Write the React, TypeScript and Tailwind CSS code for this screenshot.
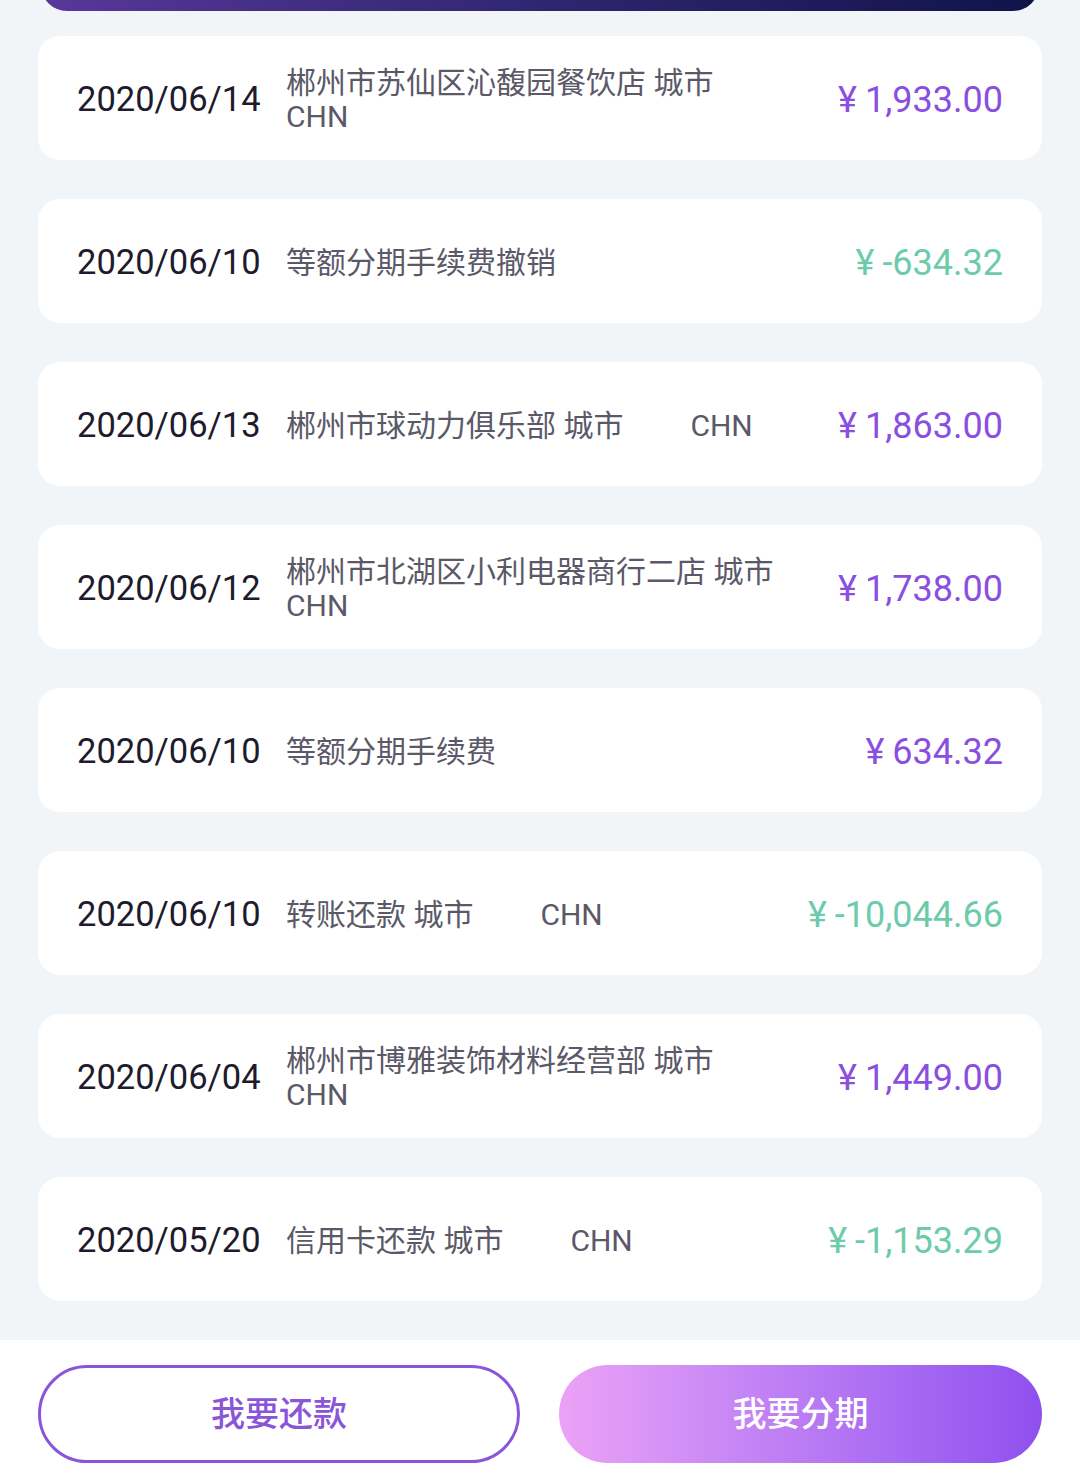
const rows = [
  { date: "2020/06/14", desc: "郴州市苏仙区沁馥园餐饮店 城市         CHN", amount: "1,933.00", out: true },
  { date: "2020/06/10", desc: "等额分期手续费撤销", amount: "-634.32", out: false },
  { date: "2020/06/13", desc: "郴州市球动力俱乐部 城市         CHN", amount: "1,863.00", out: true },
  { date: "2020/06/12", desc: "郴州市北湖区小利电器商行二店 城市         CHN", amount: "1,738.00", out: true },
  { date: "2020/06/10", desc: "等额分期手续费", amount: "634.32", out: true },
  { date: "2020/06/10", desc: "转账还款 城市         CHN", amount: "-10,044.66", out: false },
  { date: "2020/06/04", desc: "郴州市博雅装饰材料经营部 城市         CHN", amount: "1,449.00", out: true },
  { date: "2020/05/20", desc: "信用卡还款 城市         CHN", amount: "-1,153.29", out: false },
];

export default function App() {
  return (
    <div className="w-[1080px] h-[1480px] overflow-hidden bg-[#f2f5f8] font-[Roboto,'Noto_Sans_CJK_SC',sans-serif]">
      {/* header card, mostly scrolled away */}
      <div className="mx-[41px] mt-[-49px] h-[60px] rounded-b-[26px] bg-gradient-to-r from-[#58379a] via-[#302670] to-[#10134a]" />

      <div className="flex flex-col gap-[39px] px-[38px] pt-[25px] pb-[39px]">
        {rows.map((r, i) => (
          <div key={i} className="flex h-[124px] items-center rounded-[22px] bg-white px-[39px] pt-[4px]">
            <div className="w-[209px] shrink-0 text-[34.5px] text-[#1d1b2c]">{r.date}</div>
            <div className="min-w-0 flex-1 text-[30px] leading-[34px] text-[#5b5968]">
              <span className="whitespace-pre-wrap">{r.desc}</span>
            </div>
            <div className={`ml-[24px] shrink-0 text-[36px] leading-[40px] ${r.out ? "text-[#8a4fe0]" : "text-[#6ccbab]"}`}>
              <span className="mr-[8px]">¥</span>
              {r.amount}
            </div>
          </div>
        ))}
      </div>

      <div className="flex h-[140px] justify-between bg-white px-[38px] pt-[25px]">
        <button className="flex h-[98px] w-[482px] items-center justify-center rounded-full border-[3px] border-[#8a55d8] text-[34px] font-medium text-[#8a55d8]">
          我要还款
        </button>
        <button className="flex h-[98px] w-[483px] items-center justify-center rounded-full bg-gradient-to-r from-[#eba2f6] to-[#8f4fef] text-[34px] font-medium text-white">
          我要分期
        </button>
      </div>
    </div>
  );
}
